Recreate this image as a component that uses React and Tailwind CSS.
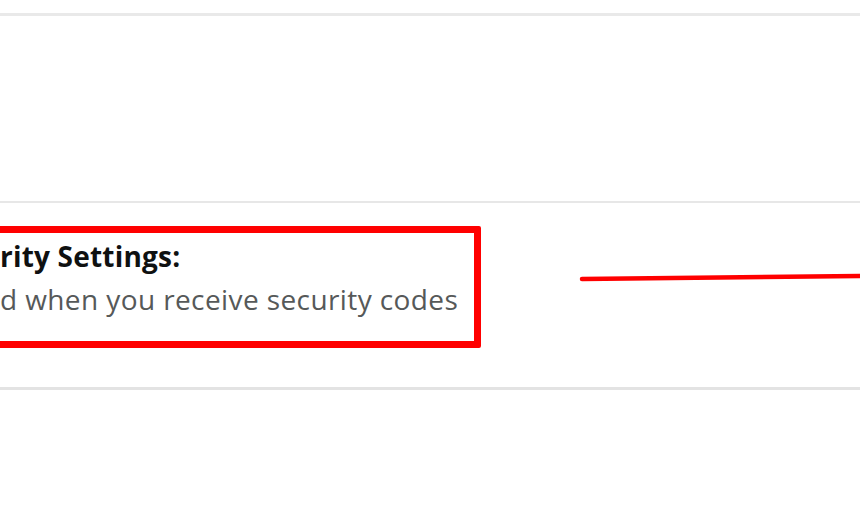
export default function App() {
  return (
    <div className="h-[520px] w-[860px] overflow-hidden bg-white pt-[13px]" style={{ fontFamily: '"Open Sans", "Noto Sans", sans-serif' }}>
      <div className="h-[188px] border-t-[3px] border-[#e9e9e9]" />
      <div className="relative h-[186px] border-t-2 border-[#e7e7e7] pt-[23px]">
        <div className="ml-[-10px] h-[122px] w-[491px] rounded-[2px] border-[7px] border-[#ff0000] pl-[3px] pt-[5px]">
          <p className="text-[28px] leading-[36px] font-bold tracking-[0.2px] text-[#0f1111]">rity Settings:</p>
          <p className="mt-[7px] text-[28px] leading-[36px] tracking-[0.4px] text-[#565959]">d when you receive security codes</p>
        </div>
        <svg className="absolute left-[578px] top-[70px]" width="282" height="10" viewBox="0 0 282 10">
          <path d="M4 6 L282 3" stroke="#ff0000" strokeWidth="4.5" strokeLinecap="round" fill="none" />
        </svg>
      </div>
      <div className="border-t-[3px] border-[#e3e3e3]" />
    </div>
  );
}
